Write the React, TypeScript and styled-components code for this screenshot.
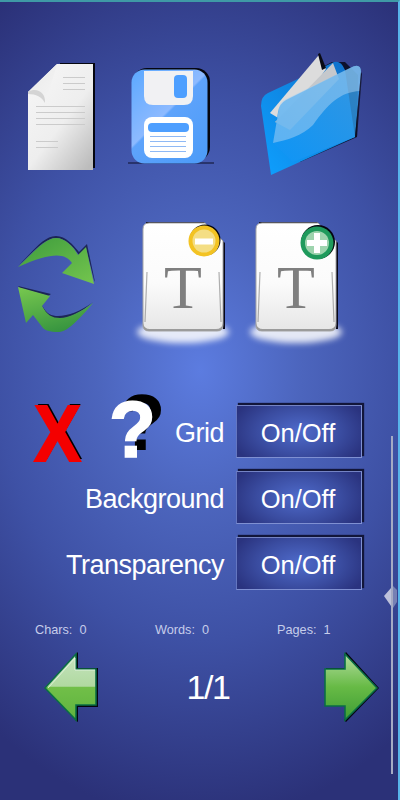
import React from "react";
import styled, { createGlobalStyle } from "styled-components";

const Global = createGlobalStyle`
  html, body { margin: 0; padding: 0; background: #2b3077; }
  * { box-sizing: border-box; }
`;

const Page = styled.div`
  position: relative;
  width: 400px;
  height: 800px;
  overflow: hidden;
  border-top: 2px solid #3f9aa6;
  border-right: 2px solid #58b4ea;
  font-family: "Liberation Sans", Arial, sans-serif;
  color: #fff;
  background: radial-gradient(ellipse 340px 450px at 200px 368px, #5c7ce0 0%, #4c65bd 30%, #3e51a5 60%, #2b3178 100%);
`;

const IconRow = styled.div<{ $cols: string; $left: number; $top: number; $height: number }>`
  display: grid;
  grid-template-columns: ${(p) => p.$cols};
  padding-left: ${(p) => p.$left}px;
  margin-top: ${(p) => p.$top}px;
  height: ${(p) => p.$height}px;
`;

const Icon = styled.svg`
  display: block;
  overflow: visible;
`;

const Settings = styled.div`
  display: grid;
  grid-template-columns: 236px 126px;
  grid-auto-rows: 53px;
  row-gap: 13px;
  margin-top: 55px;
`;

const LabelCell = styled.div`
  display: flex;
  align-items: center;
  padding: 4px 12px 0 34px;
`;

const Label = styled.span`
  margin-left: auto;
  font-size: 27px;
  letter-spacing: -0.5px;
  white-space: nowrap;
`;

const CloseMark = styled.span`
  font-weight: 700;
  font-size: 80px;
  line-height: 60px;
  width: 76px;
  color: #f40000;
  -webkit-text-stroke: 2px #f40000;
  text-shadow: 2px -2px 0 #000;
  transform: scaleX(0.88);
  transform-origin: left center;
`;

const HelpMark = styled.span`
  font-weight: 700;
  font-size: 80px;
  line-height: 60px;
  color: #fff;
  margin-top: -7px;
  margin-left: -1px;
  -webkit-text-stroke: 1.5px #fff;
  text-shadow: 10px -7px 0 #000;
  transform: scaleX(0.96);
  transform-origin: left center;
`;

const Toggle = styled.button`
  width: 126px;
  height: 53px;
  padding: 3px 2px 0 0;
  border: 0;
  border-right: 1px solid #7f90d2;
  border-bottom: 1px solid #7f90d2;
  border-left: 1px solid #6476c0;
  border-top: 1px solid #7483c4;
  color: #fff;
  font-family: inherit;
  font-size: 25.5px;
  background: radial-gradient(ellipse 70px 40px at 50% 50%, #4f6bcb 0%, #3a4ca0 60%, #2a337f 100%);
  box-shadow: 2px -2px 1px #12163a;
`;

const Stats = styled.div`
  display: grid;
  grid-template-columns: 120px 122px auto;
  padding-left: 35px;
  margin-top: 32px;
  font-size: 12.7px;
  line-height: 16px;
  color: #c6cdea;
  white-space: pre;
`;

const Nav = styled.div`
  display: flex;
  align-items: center;
  padding-left: 43px;
  margin-top: 13px;
  height: 72px;
`;

const PageCount = styled.div`
  flex: 0 0 224px;
  padding-right: 6px;
  text-align: center;
  font-size: 34px;
  letter-spacing: -1.5px;
`;

const SliderTrack = styled.div`
  position: absolute;
  left: 391px;
  top: 434px;
  width: 2px;
  height: 338px;
  background: #a5aac4;
`;

const SliderThumb = styled.svg`
  position: absolute;
  left: 383px;
  top: 581px;
`;

const FileIcon = () => (
  <Icon width={72} height={120} viewBox="26 55 72 120">
    <defs>
      <linearGradient id="fileB" x1="0.1" y1="0" x2="0.9" y2="1">
        <stop offset="0" stopColor="#f6f6f6" />
        <stop offset="0.55" stopColor="#eeeeee" />
        <stop offset="1" stopColor="#bcbcbc" />
      </linearGradient>
      <linearGradient id="fileF" x1="0" y1="0" x2="1" y2="1">
        <stop offset="0" stopColor="#e9e9e9" />
        <stop offset="1" stopColor="#f5f5f5" />
      </linearGradient>
    </defs>
    <path d="M60 63H95V168H92V65H60Z" fill="#05060f" />
    <path d="M57 64H93V170H28V92Z" fill="url(#fileB)" />
    <path d="M57 64L28 92C36 90 42 92 45 103 49 92 53 78 57 64Z" fill="url(#fileF)" />
    <path d="M28 92C36 87 46 92 45 103 42 97 36 94 28 94Z" fill="#d4d4d4" />
    <g stroke="#cbcbcb" strokeWidth="1">
      <path d="M63 77.5H85M63 83.5H85M63 89.5H85" />
      <path d="M36 106.5H85M36 112.5H85M36 118.5H85M36 124.5H85" />
      <path d="M36 141.5H58M36 147.5H58" />
    </g>
  </Icon>
);

const SaveIcon = () => (
  <Icon width={90} height={120} viewBox="126 55 90 120">
    <defs>
      <linearGradient id="saveG" x1="0" y1="0" x2="0.8" y2="1">
        <stop offset="0" stopColor="#5ba8ff" />
        <stop offset="0.5" stopColor="#8dbaff" />
        <stop offset="0.52" stopColor="#5ea3fb" />
        <stop offset="1" stopColor="#4e9cf8" />
      </linearGradient>
    </defs>
    <rect x="128" y="162" width="86" height="2" fill="#1d2450" opacity="0.7" />
    <rect x="133" y="68" width="77" height="93" rx="14" fill="#05060f" />
    <rect x="131.5" y="69.5" width="76" height="94" rx="13" fill="url(#saveG)" />
    <path d="M144 71H193V96Q193 105 184 105H153Q144 105 144 96Z" fill="#f1f1f3" />
    <rect x="174" y="75" width="13" height="23" rx="4" fill="#4e9fff" />
    <rect x="144" y="117" width="49" height="41" rx="8" fill="#fff" />
    <rect x="148" y="123" width="41" height="9" rx="4" fill="#4e9fff" />
    <path d="M150 136.5H186M150 141.5H186M150 146.5H186M150 151.5H186" stroke="#8fb9f5" strokeWidth="1" />
  </Icon>
);

const FolderIcon = () => (
  <Icon width={106} height={120} viewBox="258 55 106 120">
    <defs>
      <linearGradient id="folderB" x1="0" y1="1" x2="1" y2="0">
        <stop offset="0" stopColor="#0ea0ff" />
        <stop offset="1" stopColor="#0f6fc8" />
      </linearGradient>
      <linearGradient id="folderF" x1="0" y1="1" x2="1" y2="0">
        <stop offset="0" stopColor="#0d94f6" />
        <stop offset="1" stopColor="#3e9fe6" />
      </linearGradient>
    </defs>
    <path d="M264 97L332 62 345 62 358 75 357 137 300 162Z" fill="#07091a" opacity="0.85" />
    <path d="M261 106Q261 96 268 93L334 62Q341 60 345 70L355 137 271 175Z" fill="url(#folderB)" />
    <path d="M270 113L318 56 320 55 326 69 288 124Z" fill="#dcdcdc" />
    <path d="M318 54L320 53 326 68 322 70Z" fill="#090a14" />
    <path d="M275 122L333 63 339 79 290 130Z" fill="#c5c8cc" />
    <path d="M278 112Q279 104 286 100L350 68Q361 62 361 72L355 137 293 162 273 143Z" fill="url(#folderF)" opacity="0.8" />
    <path d="M273 143L279 108Q280 102 286 99L350 68Q361 62 361 72L360 91C340 92 328 104 313 125 302 136 287 140 273 143Z" fill="#a9d2f2" opacity="0.5" />
    <path d="M355 137L361 72 362 74 357 137Z" fill="#0c0e20" opacity="0.8" />
  </Icon>
);

const RefreshIcon = () => (
  <Icon width={84} height={130} viewBox="16 220 84 130">
    <defs>
      <linearGradient id="refA" x1="0" y1="0" x2="1" y2="1">
        <stop offset="0" stopColor="#3d9b3d" />
        <stop offset="1" stopColor="#74c54e" />
      </linearGradient>
      <linearGradient id="refB" x1="0.2" y1="0" x2="0.6" y2="1">
        <stop offset="0" stopColor="#74c54e" />
        <stop offset="1" stopColor="#35933f" />
      </linearGradient>
    </defs>
    <g fill="#0c1030" opacity="0.7">
      <path d="M56 236C66 236 73 245 79 252L87 244 95 282 94 280 86 248 79 255C73 246 65 238 56 238 45 238 33 252 19 265 34 250 44 236 56 236Z" />
      <path d="M18 286L51 294 48 296 20 288Z" />
      <path d="M42 305C46 314 52 316 58 316 68 316 81 311 93 302 82 312 68 319 58 319 50 319 45 314 42 305Z" />
    </g>
    <path d="M18 267C34 252 45 238 56 238 65 238 73 246 78 255L86 247 94 284 62 273 72 263C65 253 52 252 18 267Z" fill="url(#refA)" />
    <path d="M93 303C81 317 68 332 59 332 49 332 45 330 43 328L33 315 26 323 18 287 50 296 42 306C47 315 52 318 60 318 68 318 81 312 93 303Z" fill="url(#refB)" />
  </Icon>
);

const DocIcon = ({ plus }: { plus?: boolean }) => (
  <Icon width={102} height={130} viewBox="132 220 102 130">
    <defs>
      <linearGradient id={plus ? "docP" : "docM"} x1="0" y1="0" x2="0" y2="1">
        <stop offset="0" stopColor="#ffffff" />
        <stop offset="0.55" stopColor="#fbfbfb" />
        <stop offset="1" stopColor="#e6e6e6" />
      </linearGradient>
      <filter id={plus ? "blurP" : "blurM"} x="-20%" y="-50%" width="140%" height="200%">
        <feGaussianBlur stdDeviation="3" />
      </filter>
    </defs>
    <ellipse cx="183" cy="332" rx="46" ry="11" fill="#fff" opacity="0.85" filter={`url(#${plus ? "blurP" : "blurM"})`} />
    <path d="M146 222H204L225 243V329H223V245L204 224H146Z" fill="#06071a" />
    <path d="M149 223H205L223 241V325Q223 331 217 331H149Q143 331 143 325V229Q143 223 149 223Z" fill={`url(#${plus ? "docP" : "docM"})`} stroke="#a6a6a6" strokeWidth="1" />
    <path d="M143 323V325Q143 331 149 331H217Q223 331 223 325V323Q222 329 216 329H150Q144 329 143 323Z" fill="#9b9b9b" />
    <path d="M147 272L145 322M219 272L221 322" stroke="#8e8e8e" strokeWidth="1.2" opacity="0.7" />
    <text x="183" y="308" textAnchor="middle" fontFamily="'Liberation Serif', serif" fontSize="62" fill="#7f7f7f">T</text>
    {plus ? (
      <>
        <circle cx="205" cy="242" r="17" fill="#05060f" />
        <circle cx="204" cy="243" r="16.5" fill="#1f9a5c" />
        <circle cx="204" cy="243" r="12" fill="#9ed4ae" />
        <path d="M201 233H207V240H214V246H207V253H201V246H194V240H201Z" fill="#fff" />
      </>
    ) : (
      <>
        <circle cx="205" cy="240" r="15.5" fill="#05060f" />
        <circle cx="204" cy="241" r="15.5" fill="#f3c323" />
        <circle cx="204" cy="241" r="11.5" fill="#f4de84" />
        <rect x="195" y="238.5" width="18" height="6" fill="#fff" />
      </>
    )}
  </Icon>
);

const ArrowLeft = () => (
  <Icon width={56} height={72} viewBox="43 651 56 72">
    <defs>
      <linearGradient id="arrL" x1="0" y1="0" x2="0" y2="1">
        <stop offset="0" stopColor="#c6e4bf" />
        <stop offset="0.49" stopColor="#b0d9a0" />
        <stop offset="0.5" stopColor="#71bf48" />
        <stop offset="1" stopColor="#5fb33f" />
      </linearGradient>
    </defs>
    <path d="M78 652V668H98V707H78V722L75 720V705H95V671H75V655Z" fill="#05060f" />
    <path d="M45 688L76 654V669H96V705H76V720Z" fill="url(#arrL)" stroke="#0a6e45" strokeWidth="1.6" strokeLinejoin="miter" />
    <path d="M48 688L75 658V670H95" fill="none" stroke="#eaf6e6" strokeWidth="0.8" />
  </Icon>
);

const ArrowRight = () => (
  <Icon width={57} height={72} viewBox="323 651 57 72">
    <defs>
      <linearGradient id="arrR" x1="0" y1="0" x2="0" y2="1">
        <stop offset="0" stopColor="#b2dc9f" />
        <stop offset="0.5" stopColor="#67ba45" />
        <stop offset="1" stopColor="#3e9d35" />
      </linearGradient>
    </defs>
    <path d="M346 652L379 688 346 722 344 720 375 688 344 655ZM326 668H345V671H326Z" fill="#05060f" />
    <path d="M377 688L345 654V669H325V706H345V720Z" fill="url(#arrR)" stroke="#0a6e45" strokeWidth="1.6" strokeLinejoin="miter" />
  </Icon>
);

export default function App() {
  const toggles = ["Grid", "Background", "Transparency"];
  return (
    <>
      <Global />
      <Page>
        <IconRow $cols="100px 132px 106px" $left={26} $top={53} $height={120}>
          <FileIcon />
          <SaveIcon />
          <FolderIcon />
        </IconRow>
        <IconRow $cols="116px 113px 102px" $left={16} $top={45} $height={130}>
          <RefreshIcon />
          <DocIcon />
          <DocIcon plus />
        </IconRow>
        <Settings>
          {toggles.map((name, i) => (
            <React.Fragment key={name}>
              <LabelCell>
                {i === 0 && <CloseMark>X</CloseMark>}
                {i === 0 && <HelpMark>?</HelpMark>}
                <Label>{name}</Label>
              </LabelCell>
              <Toggle>On/Off</Toggle>
            </React.Fragment>
          ))}
        </Settings>
        <Stats>
          <span>Chars:  0</span>
          <span>Words:  0</span>
          <span>Pages:  1</span>
        </Stats>
        <Nav>
          <ArrowLeft />
          <PageCount>1/1</PageCount>
          <ArrowRight />
        </Nav>
        <SliderTrack />
        <SliderThumb width={15} height={28} viewBox="0 0 15 28">
          <path d="M1 13L8 5V23Z" fill="#c4c8de" opacity="0.95" />
          <path d="M10 3L14 7V19L10 25Z" fill="#7d87b8" opacity="0.9" />
        </SliderThumb>
      </Page>
    </>
  );
}
